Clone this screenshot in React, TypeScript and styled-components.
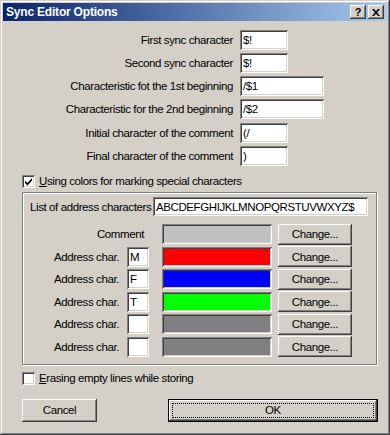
import React from "react";
import styled, { createGlobalStyle, css } from "styled-components";

const GlobalStyle = createGlobalStyle`
  html, body {
    margin: 0;
    padding: 0;
    background: #d4d0c8;
  }
  body {
    font-family: "Liberation Sans", Arial, sans-serif;
    font-size: 11.5px;
    letter-spacing: -0.4px;
    color: #000;
  }
  * {
    box-sizing: border-box;
  }
`;

const sunken = css`
  box-shadow: inset 1px 1px #808080, inset -1px -1px #ffffff,
    inset 2px 2px #404040, inset -2px -2px #d4d0c8;
`;

const raised = css`
  box-shadow: inset -1px -1px #404040, inset 1px 1px #ffffff,
    inset -2px -2px #808080, inset 2px 2px #d4d0c8;
`;

const Window = styled.div`
  width: 390px;
  height: 435px;
  padding: 3px;
  background: #d4d0c8;
  box-shadow: inset -1px -1px #404040, inset 1px 1px #d4d0c8,
    inset -2px -2px #808080, inset 2px 2px #ffffff;
  display: flex;
  flex-direction: column;
`;

const TitleBar = styled.div`
  height: 18px;
  display: flex;
  align-items: center;
  padding: 0 3px 0 3px;
  background: linear-gradient(to right, #0a246a, #a6caf0);
  color: #fff;
  font-family: "Liberation Sans", Arial, sans-serif;
  font-weight: bold;
  font-size: 12px;
  letter-spacing: -0.2px;
`;

const Title = styled.span`
  flex: 1;
`;

const CaptionButton = styled.button<{ $gap?: boolean }>`
  width: 16px;
  height: 14px;
  margin: 0 0 0 ${(p) => (p.$gap ? "2px" : "0")};
  padding: 0;
  border: none;
  background: #d4d0c8;
  ${raised};
  display: flex;
  align-items: center;
  justify-content: center;
  font-family: "Liberation Sans", Arial, sans-serif;
  font-weight: bold;
  font-size: 11px;
  color: #000;
  line-height: 1;
`;

const Content = styled.div`
  display: flex;
  flex-direction: column;
  padding: 9px 9px 0 19px;
`;

const FieldGrid = styled.div`
  display: grid;
  grid-template-columns: 211px auto;
  column-gap: 7px;
  row-gap: 3px;
  align-items: center;
`;

const FieldLabel = styled.label<{ $push?: boolean }>`
  text-align: right;
  white-space: nowrap;
  margin-top: ${(p) => (p.$push ? "1px" : "0")};
`;

const TextBox = styled.input<{ $w: number; $h?: number; $push?: boolean }>`
  width: ${(p) => p.$w}px;
  height: ${(p) => p.$h ?? 20}px;
  margin: ${(p) => (p.$push ? "1px" : "0")} 0 0 0;
  padding: 0 3px;
  border: none;
  outline: none;
  background: #fff;
  ${sunken};
  font: inherit;
  letter-spacing: inherit;
  color: #000;
`;

const CheckRow = styled.label<{ $top: number }>`
  display: flex;
  align-items: center;
  gap: 4px;
  height: 13px;
  line-height: 13px;
  margin-top: ${(p) => p.$top}px;
  white-space: nowrap;
`;

const CheckBox = styled.span`
  width: 13px;
  height: 13px;
  flex-shrink: 0;
  background: #fff;
  ${sunken};
  display: flex;
  align-items: center;
  justify-content: center;
`;

const GroupBox = styled.div`
  margin-top: 4px;
  width: 355px;
  border: 1px solid #808080;
  box-shadow: inset 1px 1px #ffffff, 1px 1px #ffffff;
  padding: 4px 7px 7px 7px;
  display: flex;
  flex-direction: column;
`;

const ListRow = styled.div`
  display: flex;
  align-items: center;
`;

const ListLabel = styled.span`
  width: 123px;
  white-space: nowrap;
`;

const ColorRows = styled.div`
  margin-top: 8px;
  display: flex;
  flex-direction: column;
  gap: 2.6px;
`;

const ColorRow = styled.div`
  display: flex;
  align-items: center;
  height: 20px;
`;

const RowLabel = styled.span<{ $wide?: boolean }>`
  width: ${(p) => (p.$wide ? 114 : 89)}px;
  margin-right: ${(p) => (p.$wide ? 18 : 8)}px;
  text-align: right;
  white-space: nowrap;
`;

const CharBox = styled(TextBox)`
  margin-right: 13px;
`;

const Swatch = styled.div<{ $color: string }>`
  width: 110px;
  height: 20px;
  background: ${(p) => p.$color};
  ${sunken};
`;

const Button = styled.button<{ $w: number; $h: number; $default?: boolean }>`
  width: ${(p) => p.$w}px;
  height: ${(p) => p.$h}px;
  padding: 0;
  border: ${(p) => (p.$default ? "1px solid #000" : "none")};
  background: #d4d0c8;
  ${raised};
  font: inherit;
  letter-spacing: inherit;
  color: #000;
  ${(p) =>
    p.$default &&
    css`
      outline: 1px dotted #000;
      outline-offset: -5px;
    `}
`;

const ChangeButton = styled(Button)`
  margin-left: 6px;
`;

const ButtonRow = styled.div`
  margin-top: 14px;
  display: flex;
  justify-content: space-between;
`;

const CloseGlyph = () => (
  <svg width="8" height="7" viewBox="0 0 8 7">
    <path
      d="M0 0h2l2 2.3 2-2.3h2l-3 3.5 3 3.5h-2l-2-2.3-2 2.3h-2l3-3.5z"
      fill="#000"
    />
  </svg>
);

const CheckGlyph = () => (
  <svg width="9" height="9" viewBox="0 0 9 9">
    <path d="M1 3.5l2.5 2.5 4.5-5v2.5l-4.5 5-2.5-2.5z" fill="#000" />
  </svg>
);

const topFields = [
  { label: "First sync character", value: "$!", w: 48 },
  { label: "Second sync character", value: "$!", w: 48 },
  { label: "Characteristic fot the 1st beginning", value: "/$1", w: 84 },
  { label: "Characteristic for the 2nd beginning", value: "/$2", w: 84 },
  { label: "Initial character of the comment", value: "(/", w: 48, push: true },
  { label: "Final character of the comment", value: ")", w: 48 },
];

const addressRows = [
  { ch: "M", color: "#ff0000" },
  { ch: "F", color: "#0000ff" },
  { ch: "T", color: "#00ff00" },
  { ch: "", color: "#808080" },
  { ch: "", color: "#808080" },
];

export default function App() {
  return (
    <>
      <GlobalStyle />
      <Window>
        <TitleBar>
          <Title>Sync Editor Options</Title>
          <CaptionButton>?</CaptionButton>
          <CaptionButton $gap>
            <CloseGlyph />
          </CaptionButton>
        </TitleBar>
        <Content>
          <FieldGrid>
            {topFields.map((f) => (
              <React.Fragment key={f.label}>
                <FieldLabel $push={f.push}>{f.label}</FieldLabel>
                <TextBox
                  $w={f.w}
                  $push={f.push}
                  defaultValue={f.value}
                  readOnly
                />
              </React.Fragment>
            ))}
          </FieldGrid>

          <CheckRow $top={9}>
            <CheckBox>
              <CheckGlyph />
            </CheckBox>
            <span>
              <u>U</u>sing colors for marking special characters
            </span>
          </CheckRow>

          <GroupBox>
            <ListRow>
              <ListLabel>List of address characters</ListLabel>
              <TextBox
                $w={215}
                $h={19}
                defaultValue="ABCDEFGHIJKLMNOPQRSTUVWXYZ$"
                readOnly
              />
            </ListRow>
            <ColorRows>
              <ColorRow>
                <RowLabel $wide>Comment</RowLabel>
                <Swatch $color="#c0c0c0" />
                <ChangeButton $w={74} $h={21}>
                  Change...
                </ChangeButton>
              </ColorRow>
              {addressRows.map((r, i) => (
                <ColorRow key={i}>
                  <RowLabel>Address char.</RowLabel>
                  <CharBox $w={22} defaultValue={r.ch} readOnly />
                  <Swatch $color={r.color} />
                  <ChangeButton $w={74} $h={21}>
                    Change...
                  </ChangeButton>
                </ColorRow>
              ))}
            </ColorRows>
          </GroupBox>

          <CheckRow $top={7}>
            <CheckBox />
            <span>
              <u>E</u>rasing empty lines while storing
            </span>
          </CheckRow>

          <ButtonRow>
            <Button $w={75} $h={23}>
              Cancel
            </Button>
            <Button $w={210} $h={23} $default>
              OK
            </Button>
          </ButtonRow>
        </Content>
      </Window>
    </>
  );
}
